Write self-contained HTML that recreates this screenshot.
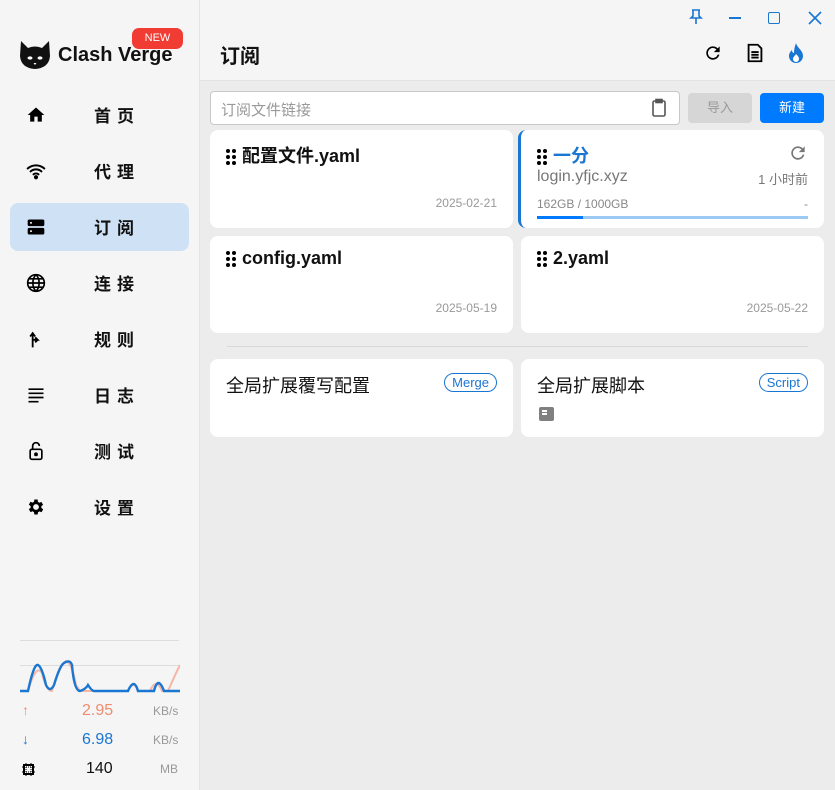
<!DOCTYPE html>
<html><head><meta charset="utf-8"><style>
*{margin:0;padding:0;box-sizing:border-box}
body{width:835px;height:790px;overflow:hidden;font-family:"Liberation Sans","Noto Sans CJK SC",sans-serif;background:#ececec;position:relative}
.side{position:absolute;left:0;top:0;width:200px;height:790px;background:#f5f5f5;border-right:1px solid #e4e4e4}
.top{position:absolute;left:200px;top:0;right:0;height:81px;background:#f5f5f5;border-bottom:1px solid #e2e2e2}
.nav{position:absolute;left:10px;width:179px;height:48px;border-radius:8px}
.nav svg{position:absolute;left:16px;top:14px}
.nav span{position:absolute;left:84px;top:11px;font-size:17px;font-weight:bold;letter-spacing:6px;color:#111}
.card{position:absolute;background:#fff;border-radius:8px}
.dots{display:inline-block;vertical-align:middle;margin-right:6px}
.t{position:absolute;left:16px;top:12px;font-size:18px;font-weight:bold;color:#111}
.d{position:absolute;right:16px;bottom:18px;font-size:12px;color:#999}
.abs{position:absolute}
</style></head><body>
<div class="side">
 <svg class="abs" style="left:19px;top:40px" width="32" height="30" viewBox="0 0 32 30"><path d="M2 1 L9 8 Q16 5 23 8 L30 1 L31 16 Q30 28 16 29 Q2 28 1 16 Z" fill="#111"/><ellipse cx="11" cy="18" rx="2.5" ry="1.6" fill="#fff"/><ellipse cx="21" cy="18" rx="2.5" ry="1.6" fill="#fff"/><path d="M14.5 23 L17.5 23 L16 25Z" fill="#fff"/></svg>
 <div class="abs" style="left:58px;top:44px;font-size:20px;font-weight:bold;color:#111">Clash Verge</div>
 <div class="abs" style="left:132px;top:28px;width:51px;height:21px;background:#f03c32;border-radius:7px;color:#fff;font-size:11px;text-align:center;line-height:20px">NEW</div>
 <div class="nav" style="top:91px"><svg width="20" height="20" viewBox="0 0 24 24"><path d="M10 20v-6h4v6h5v-8h3L12 3 2 12h3v8z"/></svg><span>首页</span></div>
 <div class="nav" style="top:147px"><svg width="20" height="20" viewBox="0 0 24 24" fill="none" stroke="#000" stroke-width="2.4" stroke-linecap="round"><path d="M2 9a15 15 0 0 1 20 0M5.5 12.5a10 10 0 0 1 13 0M9 16a5 5 0 0 1 6 0"/><circle cx="12" cy="19.5" r="1.3" fill="#000"/></svg><span>代理</span></div>
 <div class="nav" style="top:203px;background:#cfe2f5"><svg width="20" height="20" viewBox="0 0 24 24"><rect x="2" y="3" width="20" height="8" rx="2"/><rect x="2" y="13" width="20" height="8" rx="2"/><rect x="5" y="6" width="2" height="2" fill="#fff"/><rect x="5" y="16" width="2" height="2" fill="#fff"/></svg><span>订阅</span></div>
 <div class="nav" style="top:259px"><svg width="20" height="20" viewBox="0 0 24 24" fill="none" stroke="#000" stroke-width="2"><circle cx="12" cy="12" r="10"/><path d="M2 12h20M12 2c-5 5-5 15 0 20M12 2c5 5 5 15 0 20M4 7h16M4 17h16"/></svg><span>连接</span></div>
 <div class="nav" style="top:315px"><svg width="20" height="20" viewBox="0 0 24 24" fill="none" stroke="#000" stroke-width="2.2"><path d="M8 22V6M5 9l3-4 3 4M8 13h6l-3-3M14 13l-3 3"/></svg><span>规则</span></div>
 <div class="nav" style="top:371px"><svg width="20" height="20" viewBox="0 0 24 24"><path d="M3 4h18v2H3zM3 9h18v2H3zM3 14h18v2H3zM3 19h12v2H3z"/></svg><span>日志</span></div>
 <div class="nav" style="top:427px"><svg width="20" height="20" viewBox="0 0 24 24" fill="none" stroke="#000" stroke-width="2"><rect x="5" y="10" width="14" height="12" rx="2"/><path d="M8 10V6a4 4 0 0 1 8 0"/><circle cx="12" cy="16" r="1.3" fill="#000"/></svg><span>测试</span></div>
 <div class="nav" style="top:483px"><svg width="20" height="20" viewBox="0 0 24 24"><path d="M19.4 13a7.5 7.5 0 0 0 0-2l2.1-1.6-2-3.5-2.5 1a7 7 0 0 0-1.7-1L15 3h-4l-.4 2.7a7 7 0 0 0-1.7 1l-2.5-1-2 3.5L6.6 11a7.5 7.5 0 0 0 0 2l-2.2 1.6 2 3.5 2.5-1a7 7 0 0 0 1.7 1L11 21h4l.4-2.7a7 7 0 0 0 1.7-1l2.5 1 2-3.5zM13 15.5a3.5 3.5 0 1 1 0-7 3.5 3.5 0 0 1 0 7z" transform="translate(-1 0)"/></svg><span>设置</span></div>
 <div class="abs" style="left:20px;top:640px;width:159px;height:1px;background:#ddd"></div>
 <div class="abs" style="left:20px;top:665px;width:159px;height:1px;background:#ddd"></div>
 <svg class="abs" style="left:20px;top:655px" width="160" height="40" viewBox="0 0 160 40"><path d="M0 36 L8 36 Q16 8 22 18 Q26 36 32 36 Q40 10 46 6 Q52 8 56 30 L60 36 L108 36 Q114 24 118 36 L130 36 Q136 22 142 36 L148 36 Q155 20 160 10" fill="none" stroke="#f5b7a5" stroke-width="2"/><path d="M0 36 L8 36 Q14 8 18 10 Q22 12 26 30 Q30 38 34 30 Q40 10 44 8 Q50 4 52 10 Q54 36 60 36 Q66 34 68 30 Q72 36 74 36 L108 36 Q114 22 118 36 L134 36 Q138 20 144 36 L160 36" fill="none" stroke="#1976d2" stroke-width="2.4"/></svg>
 <div class="abs" style="left:22px;top:702px;color:#f08c70;font-size:14px">↑</div>
 <div class="abs" style="left:82px;top:702px;color:#f08c70;font-size:16px">2.95</div>
 <div class="abs" style="left:22px;top:731px;color:#1976d2;font-size:14px">↓</div>
 <div class="abs" style="left:82px;top:731px;color:#1976d2;font-size:16px">6.98</div>
 <div class="abs" style="left:153px;top:704px;color:#999;font-size:12px">KB/s</div>
 <div class="abs" style="left:153px;top:733px;color:#999;font-size:12px">KB/s</div>
 <svg class="abs" style="left:22px;top:763px" width="13" height="13" viewBox="0 0 13 13"><rect x="2" y="2" width="9" height="9" fill="none" stroke="#000" stroke-width="2"/><path d="M4 0v13M9 0v13M0 4h13M0 9h13" stroke="#000" stroke-width="1" stroke-dasharray="1 1"/></svg>
 <div class="abs" style="left:86px;top:760px;color:#111;font-size:16px">140</div>
 <div class="abs" style="left:160px;top:762px;color:#999;font-size:12px">MB</div>
</div>
<div class="top">
 <div class="abs" style="left:20px;top:40px;font-size:20px;font-weight:bold;color:#111">订阅</div>
 <svg class="abs" style="left:489px;top:9px" width="14" height="16" viewBox="0 0 14 16" fill="none" stroke="#1976d2" stroke-width="1.6"><path d="M3 1h8M4 1v6l-2 2h10l-2-2V1M7 9v6"/></svg>
 <div class="abs" style="left:529px;top:17px;width:12px;height:1.5px;background:#1976d2"></div>
 <div class="abs" style="left:568px;top:12px;width:12px;height:12px;border:1.5px solid #1976d2;border-radius:2px"></div>
 <svg class="abs" style="left:608px;top:11px" width="14" height="14" stroke="#1976d2" stroke-width="1.6"><path d="M1 1l12 12M13 1L1 13"/></svg>
 <svg class="abs" style="left:503px;top:43px" width="20" height="20" viewBox="0 0 24 24"><path d="M17.6 6.4A8 8 0 1 0 19.7 14h-2.1a6 6 0 1 1-1.4-6.2L13 11h7V4z"/></svg>
 <svg class="abs" style="left:544px;top:42px" width="22" height="22" viewBox="0 0 24 24" fill="none" stroke="#000" stroke-width="2"><path d="M5 3h10l4 4v14H5z"/><path d="M8 11h8M8 14h8M8 17h8"/></svg>
 <svg class="abs" style="left:586px;top:42px" width="20" height="22" viewBox="0 0 20 22"><path d="M10 1C11 6 17 8 17 14a7 7 0 0 1-14 0c0-3 2-5 3-6 0 2 1 3 2 3C8 7 9 4 10 1z" fill="#1976d2"/><path d="M10 12c2 2 3 3 3 5a3 3 0 0 1-6 0c0-2 2-3 3-5z" fill="#fff"/></svg>
</div>
<div class="abs" style="left:210px;top:91px;width:470px;height:34px;background:#fff;border:1px solid #c8c8c8;border-radius:4px"><span class="abs" style="left:10px;top:7px;font-size:15px;color:#999">订阅文件链接</span>
 <svg class="abs" style="left:440px;top:6px" width="16" height="20" viewBox="0 0 16 20" fill="none" stroke="#555" stroke-width="1.6"><rect x="2" y="3" width="12" height="15" rx="1.5"/><rect x="5" y="1.5" width="6" height="3" fill="#555"/></svg></div>
<div class="abs" style="left:688px;top:93px;width:64px;height:30px;background:#d6d6d6;border-radius:4px;color:#999;font-size:13px;text-align:center;line-height:30px">导入</div>
<div class="abs" style="left:760px;top:93px;width:64px;height:30px;background:#007aff;border-radius:4px;color:#fff;font-size:13px;text-align:center;line-height:30px">新建</div>

<svg width="0" height="0" style="position:absolute"><defs><g id="dt"><circle cx="2" cy="2" r="2"/><circle cx="8" cy="2" r="2"/><circle cx="2" cy="8" r="2"/><circle cx="8" cy="8" r="2"/><circle cx="2" cy="14" r="2"/><circle cx="8" cy="14" r="2"/></g></defs></svg>
<div class="card" style="left:210px;top:130px;width:303px;height:98px"><div class="t"><svg class="dots" width="10" height="16"><use href="#dt"/></svg>配置文件.yaml</div><div class="d">2025-02-21</div></div>
<div class="card" style="left:518px;top:130px;width:306px;height:98px;border-left:3px solid #1976d2">
 <div class="t" style="left:16px;color:#1976d2"><svg class="dots" width="10" height="16"><use href="#dt"/></svg>一分</div>
 <svg class="abs" style="right:16px;top:13px" width="20" height="20" viewBox="0 0 24 24"><path d="M17.6 6.4A8 8 0 1 0 19.7 14h-2.1a6 6 0 1 1-1.4-6.2L13 11h7V4z" fill="#777"/></svg>
 <div class="abs" style="left:16px;top:38px;font-size:16px;color:#777">login.yfjc.xyz</div>
 <div class="abs" style="right:16px;top:39px;font-size:13px;color:#777">1 小时前</div>
 <div class="abs" style="left:16px;top:67px;font-size:12px;color:#888">162GB / 1000GB</div>
 <div class="abs" style="right:16px;top:67px;font-size:12px;color:#888">-</div>
 <div class="abs" style="left:16px;top:86px;width:271px;height:3px;background:#9ccaf5"><div style="width:46px;height:3px;background:#007aff"></div></div>
</div>
<div class="card" style="left:210px;top:236px;width:303px;height:97px"><div class="t"><svg class="dots" width="10" height="16"><use href="#dt"/></svg>config.yaml</div><div class="d">2025-05-19</div></div>
<div class="card" style="left:521px;top:236px;width:303px;height:97px"><div class="t"><svg class="dots" width="10" height="16"><use href="#dt"/></svg>2.yaml</div><div class="d">2025-05-22</div></div>
<div class="abs" style="left:227px;top:346px;width:581px;height:1px;background:#d8d8d8"></div>
<div class="card" style="left:210px;top:359px;width:303px;height:78px"><div class="abs" style="left:16px;top:13px;font-size:18px;color:#111">全局扩展覆写配置</div><div class="abs" style="right:16px;top:14px;border:1px solid #1976d2;border-radius:10px;color:#1976d2;font-size:13px;padding:1px 7px">Merge</div></div>
<div class="card" style="left:521px;top:359px;width:303px;height:78px"><div class="abs" style="left:16px;top:13px;font-size:18px;color:#111">全局扩展脚本</div><div class="abs" style="right:16px;top:14px;border:1px solid #1976d2;border-radius:10px;color:#1976d2;font-size:13px;padding:1px 7px">Script</div>
 <div class="abs" style="left:18px;top:48px;width:15px;height:14px;background:#808080;border-radius:2px"><div style="position:absolute;left:3px;top:3px;width:5px;height:1.5px;background:#fff"></div><div style="position:absolute;left:3px;top:6px;width:5px;height:1.5px;background:#fff"></div></div></div>
</body></html>
